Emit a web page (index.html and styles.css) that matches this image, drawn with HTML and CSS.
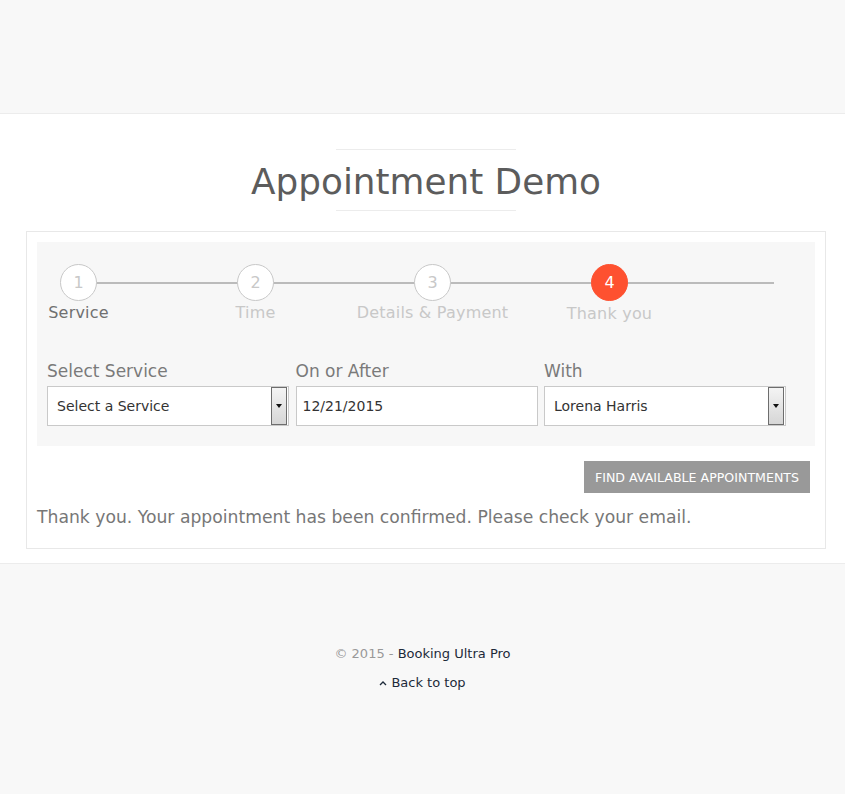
FILE: index.html
```html
<!DOCTYPE html>
<html>
<head>
<meta charset="utf-8">
<link rel="stylesheet" href="styles.css">
</head>
<body>
<header class="topbar"></header>
<main class="content">
  <div class="title-wrap">
    <div class="rule"></div>
    <h1 class="title">Appointment Demo</h1>
    <div class="rule"></div>
  </div>
  <section class="box">
    <div class="panel">
      <div class="steps">
        <div class="step done"><span class="circle">1</span><span class="label">Service</span></div>
        <div class="step"><span class="circle">2</span><span class="label">Time</span></div>
        <div class="step"><span class="circle">3</span><span class="label">Details &amp; Payment</span></div>
        <div class="step active"><span class="circle">4</span><span class="label">Thank you</span></div>
      </div>
      <div class="fields">
        <div class="field">
          <label class="flabel">Select Service</label>
          <div class="input select"><span class="val">Select a Service</span><span class="arrow"><i></i></span></div>
        </div>
        <div class="field">
          <label class="flabel">On or After</label>
          <div class="input date"><span class="val">12/21/2015</span></div>
        </div>
        <div class="field">
          <label class="flabel">With</label>
          <div class="input select"><span class="val">Lorena Harris</span><span class="arrow"><i></i></span></div>
        </div>
      </div>
    </div>
    <div class="actions">
      <button class="btn">FIND AVAILABLE APPOINTMENTS</button>
    </div>
    <p class="msg">Thank you. Your appointment has been confirmed. Please check your email.</p>
  </section>
</main>
<footer class="footer">
  <p class="copy">© 2015 - <a class="link">Booking Ultra Pro</a></p>
  <p class="totop"><a class="link"><svg class="chev" width="8" height="6" viewBox="0 0 8 6"><path d="M1 5 L4 2 L7 5" fill="none" stroke="#1d2a3a" stroke-width="1.3"/></svg>Back to top</a></p>
</footer>
</body>
</html>
```
FILE: styles.css
```css
html, body {
  margin: 0;
  padding: 0;
}
body {
  background: #f8f8f8;
  font-family: "DejaVu Sans", Verdana, sans-serif;
  color: #777;
}
.topbar {
  height: 113px;
  border-bottom: 1px solid #ececec;
}
.content {
  background: #fff;
  padding: 35px 0 14px;
  border-bottom: 1px solid #ececec;
}
.title-wrap {
  display: flex;
  flex-direction: column;
  align-items: center;
  margin-left: 7px;
}
.rule {
  width: 180px;
  height: 1px;
  background: #ececec;
}
.title {
  margin: 0;
  padding-top: 3px;
  font-family: "DejaVu Sans", sans-serif;
  font-weight: normal;
  font-size: 35.8px;
  line-height: 57px;
  color: #5c5c5c;
  white-space: nowrap;
}
.box {
  margin: 20px 19px 0 26px;
  border: 1px solid #e8e8e8;
  padding: 10px 10px 20px;
}
.panel {
  background: #f7f7f7;
  padding: 22px 10px 20px;
}
.steps {
  display: flex;
  padding-left: 13px;
  background: linear-gradient(#bbb, #bbb) no-repeat;
  background-size: 696px 2px;
  background-position: 31px 18px;
  height: 96px;
}
.step {
  width: 177px;
  display: flex;
  flex-direction: column;
  align-items: flex-start;
}
.step .circle {
  width: 35px;
  height: 35px;
  border: 1px solid #c8c8c8;
  border-radius: 50%;
  background: #fff;
  color: #c8c8c8;
  font-size: 16px;
  display: flex;
  align-items: center;
  justify-content: center;
}
.step .label {
  width: 37px;
  display: flex;
  justify-content: center;
  white-space: nowrap;
  font-size: 16px;
  letter-spacing: 0.2px;
  color: #c8c8c8;
  margin-top: 2px;
}
.step.done .label {
  color: #707070;
}
.step.active .circle {
  background: #fe5130;
  border-color: #fe5130;
  color: #fff;
}
.step.active .label {
  margin-top: 3px;
}
.fields {
  display: grid;
  grid-template-columns: 242px 242px 242px;
  column-gap: 6.5px;
}
.flabel {
  display: block;
  font-size: 17px;
  color: #7a7a7a;
  height: 26px;
  line-height: 22px;
}
.input {
  height: 38px;
  border: 1px solid #c9c9c9;
  background: #fff;
  display: flex;
  align-items: center;
  font-size: 14px;
  color: #333;
}
.select .val {
  flex: 1;
  padding-left: 9px;
}
.date .val {
  padding-left: 6px;
}
.select .arrow {
  width: 14px;
  height: 36px;
  margin-right: 1px;
  border: 1px solid #6d6d6d;
  background: linear-gradient(#f4f4f4, #d6d6d6);
  display: flex;
  align-items: center;
  justify-content: center;
}
.select .arrow i {
  width: 0;
  height: 0;
  border-left: 3.5px solid transparent;
  border-right: 3.5px solid transparent;
  border-top: 4px solid #111;
}
.actions {
  display: flex;
  justify-content: flex-end;
  padding: 15px 5px 0 0;
}
.btn {
  background: #999;
  border: none;
  color: #fff;
  font-family: "DejaVu Sans", sans-serif;
  font-size: 12.6px;
  height: 32px;
  width: 226px;
  padding: 0;
}
.msg {
  margin: 13px 0 0;
  font-size: 17.2px;
  line-height: 22px;
  color: #777;
}
.footer {
  padding-top: 80px;
  text-align: center;
  font-size: 13px;
}
.footer p {
  margin: 0;
  line-height: 20px;
}
.copy {
  color: #999;
}
.totop {
  margin-top: 9px !important;
}
.link {
  color: #1d2a3a;
}
.chev {
  margin-right: 4px;
  vertical-align: 1px;
}
```
